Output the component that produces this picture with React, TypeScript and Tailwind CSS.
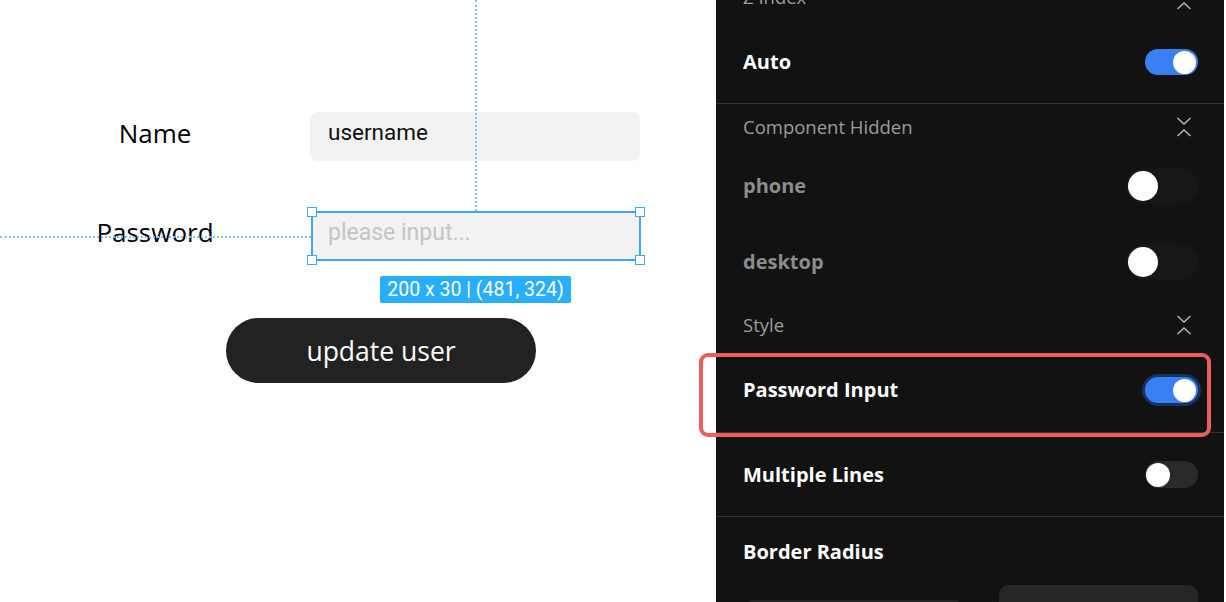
import { ReactNode } from 'react';

const sans = { fontFamily: '"Open Sans", "Noto Sans", sans-serif' };
const roboto = { fontFamily: 'Roboto, "Open Sans", sans-serif' };

const Chevrons = ({ single = false }: { single?: boolean }) => (
  <svg width="16" height="22" viewBox="0 0 16 22" fill="none" stroke="#bdbdbd" strokeWidth="1.3">
    {!single && <path d="M1.5 2 L8 8 L14.5 2" />}
    <path d="M1.5 20 L8 14 L14.5 20" />
  </svg>
);

const Toggle = ({ kind }: { kind: 'on' | 'focus' | 'off' | 'disabled' }) => {
  if (kind === 'disabled') {
    return (
      <div className="flex h-[36px] w-[72px] items-center rounded-full bg-[#171717] pl-[2px]">
        <div className="h-[30px] w-[30px] rounded-full bg-white" />
      </div>
    );
  }
  if (kind === 'off') {
    return (
      <div className="flex h-[27px] w-[53px] items-center rounded-full bg-[#2a2a2a] pl-[1px]">
        <div className="h-[24px] w-[24px] rounded-full bg-white" />
      </div>
    );
  }
  return (
    <div
      className={`flex h-[26px] w-[53px] items-center justify-end rounded-full bg-[#3b7ff4] pr-[2px] ${
        kind === 'focus' ? 'ring-[3px] ring-[#17335c]' : ''
      }`}
    >
      <div className="h-[23px] w-[23px] rounded-full bg-white" />
    </div>
  );
};

const Header = ({ label, h, single }: { label: string; h: string; single?: boolean }) => (
  <div className={`flex ${h} shrink-0 items-center justify-between pl-[27px] pr-[32px]`}>
    <span className="text-[18.5px] text-[#9c9c9c]" style={sans}>{label}</span>
    <Chevrons single={single} />
  </div>
);

const Row = ({ label, h, dim, children }: { label: string; h: string; dim?: boolean; children: ReactNode }) => (
  <div className={`flex ${h} shrink-0 items-center justify-between pl-[27px] pr-[26px]`}>
    <span className={`text-[20px] font-bold ${dim ? 'text-[#8c8c8c]' : 'text-white'}`} style={sans}>
      {label}
    </span>
    {children}
  </div>
);

const Divider = () => <div className="h-px shrink-0 bg-[#333333]" />;

const Handle = ({ cls }: { cls: string }) => (
  <div className={`absolute h-[10px] w-[10px] border-[1.5px] border-[#3ea8f8] bg-white ${cls}`} />
);

export default function App() {
  return (
    <div className="relative flex h-[602px] w-[1226px] overflow-hidden bg-white">
      {/* canvas */}
      <div className="relative h-full w-[716px] shrink-0 bg-white">
        {/* guides */}
        <div className="absolute left-[475px] top-0 h-[211px] border-l-2 border-dotted border-[#7cc4f8]" />
        <div className="absolute left-0 top-[236px] w-[311px] border-t-2 border-dotted border-[#7cc4f8]" />

        <div className="flex flex-col pt-[112px]">
          <div className="flex items-center">
            <div className="-mt-[7px] w-[310px] text-center text-[26px] text-black" style={sans}>Name</div>
            <div className="h-[49px] w-[330px] rounded-[8px] bg-[#f2f2f2] pl-[18px] pt-[4px] text-[22.5px] text-[#111]" style={roboto}>
              username
            </div>
          </div>

          <div className="mt-[50px] flex items-center">
            <div className="-mt-[8px] w-[310px] text-center text-[26px] text-black" style={sans}>Password</div>
            <div className="relative ml-px h-[50px] w-[330px] border-2 border-[#3ea8f8] bg-[#f2f2f2] pl-[15px] pt-[3px] text-[23px] text-[#c4c4c4]" style={roboto}>
              please input...
              <Handle cls="-left-[6px] -top-[6px]" />
              <Handle cls="-right-[6px] -top-[6px]" />
              <Handle cls="-left-[6px] -bottom-[6px]" />
              <Handle cls="-right-[6px] -bottom-[6px]" />
            </div>
          </div>

          <div className="ml-[380px] mt-[15px] flex h-[27px] w-[191px] items-center justify-center rounded-[2px] bg-[#27aefc] text-[19.5px] text-white" style={roboto}>
            200 x 30 | (481, 324)
          </div>

          <div className="ml-[226px] mt-[15px] flex h-[65px] w-[310px] items-center justify-center rounded-full bg-[#222222] pt-[3px] text-[26.5px] text-white" style={sans}>
            update user
          </div>
        </div>
      </div>

      {/* property panel */}
      <div className="flex h-full w-[508px] shrink-0 flex-col overflow-hidden bg-[#121212]">
        <div className="-mt-[27px] shrink-0">
          <div className="flex h-[48px] items-center justify-between pl-[27px] pr-[32px]">
            <span className="text-[18.5px] text-[#9c9c9c]" style={sans}>Z Index</span>
            <div className="-mb-[6px]"><Chevrons single /></div>
          </div>
        </div>
        <Row label="Auto" h="h-[82px]"><Toggle kind="on" /></Row>
        <Divider />
        <Header label="Component Hidden" h="h-[46px]" />
        <Row label="phone" h="h-[72px]" dim><Toggle kind="disabled" /></Row>
        <Row label="desktop" h="h-[80px]" dim><Toggle kind="disabled" /></Row>
        <Header label="Style" h="h-[46px]" />
        <Row label="Password Input" h="h-[84px]"><Toggle kind="focus" /></Row>
        <Divider />
        <Row label="Multiple Lines" h="h-[83px]"><Toggle kind="off" /></Row>
        <Divider />
        <div className="flex h-[68px] shrink-0 items-center pl-[27px] pt-[2px]">
          <span className="text-[20px] font-bold text-white" style={sans}>Border Radius</span>
        </div>
        <div className="flex shrink-0 items-start justify-between pl-[33px] pr-[26px]">
          <div className="mt-[15px] h-[4px] w-[210px] rounded-full bg-[#222222]" />
          <div className="h-[40px] w-[199px] rounded-[10px] bg-[#262626]" />
        </div>
      </div>
      <div className="h-full w-[2px] shrink-0 bg-white" />

      {/* highlight */}
      <div className="pointer-events-none absolute left-[699px] top-[353px] h-[84px] w-[512px] rounded-[9px] border-4 border-[#ee5e59]" />
    </div>
  );
}
